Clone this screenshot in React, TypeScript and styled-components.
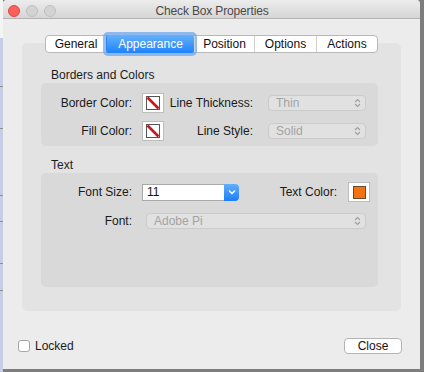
import React from 'react';
import styled, { createGlobalStyle } from 'styled-components';

const GlobalStyle = createGlobalStyle`
  html, body {
    margin: 0;
    padding: 0;
    background: #7f7f7f;
  }
  body {
    font-family: "Liberation Sans", Arial, sans-serif;
    font-size: 12px;
    color: #1a1a1a;
  }
`;

const Desktop = styled.div`
  width: 424px;
  height: 372px;
  display: flex;
  align-items: flex-start;
  overflow: hidden;
  background: #7d7d7d;
`;

const BackStrip = styled.div`
  width: 3px;
  height: 372px;
  flex-shrink: 0;
  background:
    linear-gradient(
      to bottom,
      #f4f4f4 0 38px,
      #c5cee6 38px 86px,
      #8f8f8f 86px 87px,
      #c5cee6 87px 128px,
      #8f8f8f 128px 129px,
      #c5cee6 129px 195px,
      #8f8f8f 195px 196px,
      #c5cee6 196px 221px,
      #8f8f8f 221px 222px,
      #c5cee6 222px 263px,
      #8f8f8f 263px 264px,
      #c5cee6 264px 290px,
      #8f8f8f 290px 291px,
      #c5cee6 291px
    );
`;

const Window = styled.div`
  width: 417px;
  height: 369px;
  display: flex;
  flex-direction: column;
  background: #ececec;
  border-radius: 4px 4px 0 0;
  overflow: hidden;
`;

const TitleBar = styled.div`
  height: 18px;
  flex-shrink: 0;
  display: flex;
  align-items: center;
  position: relative;
  background: linear-gradient(to bottom, #ececec, #d6d6d6);
  border-bottom: 1px solid #b3b3b3;
`;

const Lights = styled.div`
  display: flex;
  gap: 6px;
  padding-left: 5px;
  margin-top: 3px;
`;

const Light = styled.span<{ $color: string; $edge: string }>`
  width: 12px;
  height: 12px;
  border-radius: 50%;
  box-sizing: border-box;
  background: ${(p) => p.$color};
  border: 1px solid ${(p) => p.$edge};
`;

const Title = styled.div`
  flex: 1;
  text-align: center;
  margin-top: 3px;
  margin-right: 52px;
  font-size: 12px;
  letter-spacing: -0.15px;
  color: #4a4a4a;
`;

const Content = styled.div`
  padding: 16px 19px 0;
  display: flex;
  flex-direction: column;
  align-items: center;
`;

const TabBar = styled.div`
  display: flex;
  height: 18px;
  box-sizing: border-box;
  background: #fff;
  border: 1px solid #b8b8b8;
  border-radius: 4px;
  position: relative;
  z-index: 1;
`;

const Tab = styled.div<{ $w: number; $active?: boolean }>`
  width: ${(p) => p.$w}px;
  display: flex;
  align-items: center;
  justify-content: center;
  font-size: 12px;
  box-sizing: border-box;
  color: ${(p) => (p.$active ? '#fff' : '#111')};
  border-left: 1px solid #d2d2d2;
  &:first-child {
    border-left: none;
  }
  ${(p) =>
    p.$active &&
    `
    background: linear-gradient(to bottom, #66b0fb, #1d83f9);
    border-left-color: #2f86ef;
    box-shadow: 0 0 0 3px rgba(110, 168, 240, 0.75);
    border-radius: 2px;
    margin: -1px 0;
    height: 18px;
  `}
`;

const GroupBox = styled.div`
  width: 379px;
  height: 268px;
  box-sizing: border-box;
  margin-top: -10px;
  padding: 25px 23px 24px 19px;
  background: #e3e3e3;
  border-radius: 5px;
`;

const SectionTitle = styled.div<{ $gap?: number }>`
  line-height: 14px;
  margin: ${(p) => p.$gap ?? 0}px 0 1px 10px;
  color: #1c1c1c;
`;

const Panel = styled.div<{ $h: number; $top: number }>`
  height: ${(p) => p.$h}px;
  box-sizing: border-box;
  padding-top: ${(p) => p.$top}px;
  background: #d9d9d9;
  border-radius: 5px;
  display: flex;
  flex-direction: column;
  gap: 8px;
`;

const Row = styled.div<{ $gap?: number }>`
  display: flex;
  align-items: center;
  height: 20px;
  margin-top: ${(p) => p.$gap ?? 0}px;
`;

const Label = styled.div<{ $w: number; $after: number }>`
  width: ${(p) => p.$w}px;
  margin-right: ${(p) => p.$after}px;
  text-align: right;
  white-space: nowrap;
  flex-shrink: 0;
`;

const SwatchWell = styled.div`
  width: 22px;
  height: 20px;
  box-sizing: border-box;
  background: #fff;
  border: 1px solid #bdbdbd;
  display: flex;
  align-items: center;
  justify-content: center;
  flex-shrink: 0;
`;

const ColorChip = styled.div<{ $color: string }>`
  width: 13px;
  height: 13px;
  box-sizing: border-box;
  background: ${(p) => p.$color};
  border: 1px solid #6a4a30;
`;

const Popup = styled.div<{ $w: number }>`
  width: ${(p) => p.$w}px;
  height: 16px;
  box-sizing: border-box;
  display: flex;
  align-items: center;
  justify-content: space-between;
  padding: 0 4px 0 7px;
  background: #e1e1e1;
  border: 1px solid #cbcbcb;
  border-radius: 4px;
  color: #a3a3a3;
  flex-shrink: 0;
`;

const Combo = styled.div`
  width: 97px;
  height: 17px;
  display: flex;
  flex-shrink: 0;
`;

const ComboField = styled.div`
  flex: 1;
  box-sizing: border-box;
  background: #fff;
  border: 1px solid #a9a9a9;
  border-right: none;
  padding-left: 4px;
  display: flex;
  align-items: center;
  color: #111;
`;

const ComboButton = styled.div`
  width: 15px;
  display: flex;
  align-items: center;
  justify-content: center;
  background: linear-gradient(to bottom, #63aefb, #1c7ef6);
  border-radius: 0 4px 4px 0;
`;

const Footer = styled.div`
  display: flex;
  align-items: center;
  justify-content: space-between;
  height: 16px;
  margin-top: 27px;
  padding: 0 18px 0 15px;
`;

const CheckRow = styled.label`
  display: flex;
  align-items: center;
  gap: 5px;
`;

const CheckBox = styled.span`
  width: 12px;
  height: 12px;
  box-sizing: border-box;
  background: #fff;
  border: 1px solid #a6a6a6;
  border-radius: 3px;
`;

const Button = styled.div`
  width: 58px;
  height: 16px;
  box-sizing: border-box;
  display: flex;
  align-items: center;
  justify-content: center;
  background: #fff;
  border: 1px solid #b4b4b4;
  border-radius: 4px;
  color: #111;
`;

const NoColor = () => (
  <svg width="14" height="14" viewBox="0 0 14 14">
    <rect x="0.5" y="0.5" width="13" height="13" fill="#fff" stroke="#555" />
    <line x1="1.5" y1="1.5" x2="12.5" y2="12.5" stroke="#c8161f" strokeWidth="2.6" />
  </svg>
);

const UpDown = () => (
  <svg width="7" height="10" viewBox="0 0 7 10">
    <path d="M1 4 L3.5 1.5 L6 4 M1 6 L3.5 8.5 L6 6" fill="none" stroke="#a0a0a0" strokeWidth="1.1" />
  </svg>
);

const ChevronDown = () => (
  <svg width="8" height="6" viewBox="0 0 8 6">
    <path d="M1 1.5 L4 4.5 L7 1.5" fill="none" stroke="#fff" strokeWidth="1.5" />
  </svg>
);

const tabs = [
  { name: 'General', w: 60 },
  { name: 'Appearance', w: 88 },
  { name: 'Position', w: 60 },
  { name: 'Options', w: 62 },
  { name: 'Actions', w: 61 },
];

const App: React.FC = () => {
  return (
    <>
      <GlobalStyle />
      <Desktop>
        <BackStrip />
        <Window>
          <TitleBar>
            <Lights>
              <Light $color="#fc605b" $edge="#df4744" />
              <Light $color="#d3d3d3" $edge="#bebebe" />
              <Light $color="#d3d3d3" $edge="#bebebe" />
            </Lights>
            <Title>Check Box Properties</Title>
          </TitleBar>

          <Content>
            <TabBar>
              {tabs.map((t) => (
                <Tab key={t.name} $w={t.w} $active={t.name === 'Appearance'}>
                  {t.name}
                </Tab>
              ))}
            </TabBar>

            <GroupBox>
              <SectionTitle>Borders and Colors</SectionTitle>
              <Panel $h={63} $top={10}>
                <Row>
                  <Label $w={91} $after={10}>Border Color:</Label>
                  <SwatchWell>
                    <NoColor />
                  </SwatchWell>
                  <Label $w={89} $after={15}>Line Thickness:</Label>
                  <Popup $w={98}>
                    Thin
                    <UpDown />
                  </Popup>
                </Row>
                <Row>
                  <Label $w={91} $after={10}>Fill Color:</Label>
                  <SwatchWell>
                    <NoColor />
                  </SwatchWell>
                  <Label $w={89} $after={15}>Line Style:</Label>
                  <Popup $w={98}>
                    Solid
                    <UpDown />
                  </Popup>
                </Row>
              </Panel>

              <SectionTitle $gap={12}>Text</SectionTitle>
              <Panel $h={114} $top={9}>
                <Row>
                  <Label $w={91} $after={10}>Font Size:</Label>
                  <Combo>
                    <ComboField>11</ComboField>
                    <ComboButton>
                      <ChevronDown />
                    </ComboButton>
                  </Combo>
                  <Label $w={98} $after={11}>Text Color:</Label>
                  <SwatchWell>
                    <ColorChip $color="#f2730f" />
                  </SwatchWell>
                </Row>
                <Row $gap={1}>
                  <Label $w={91} $after={14}>Font:</Label>
                  <Popup $w={220}>
                    Adobe Pi
                    <UpDown />
                  </Popup>
                </Row>
              </Panel>
            </GroupBox>
          </Content>

          <Footer>
            <CheckRow>
              <CheckBox />
              Locked
            </CheckRow>
            <Button>Close</Button>
          </Footer>
        </Window>
      </Desktop>
    </>
  );
};

export default App;
